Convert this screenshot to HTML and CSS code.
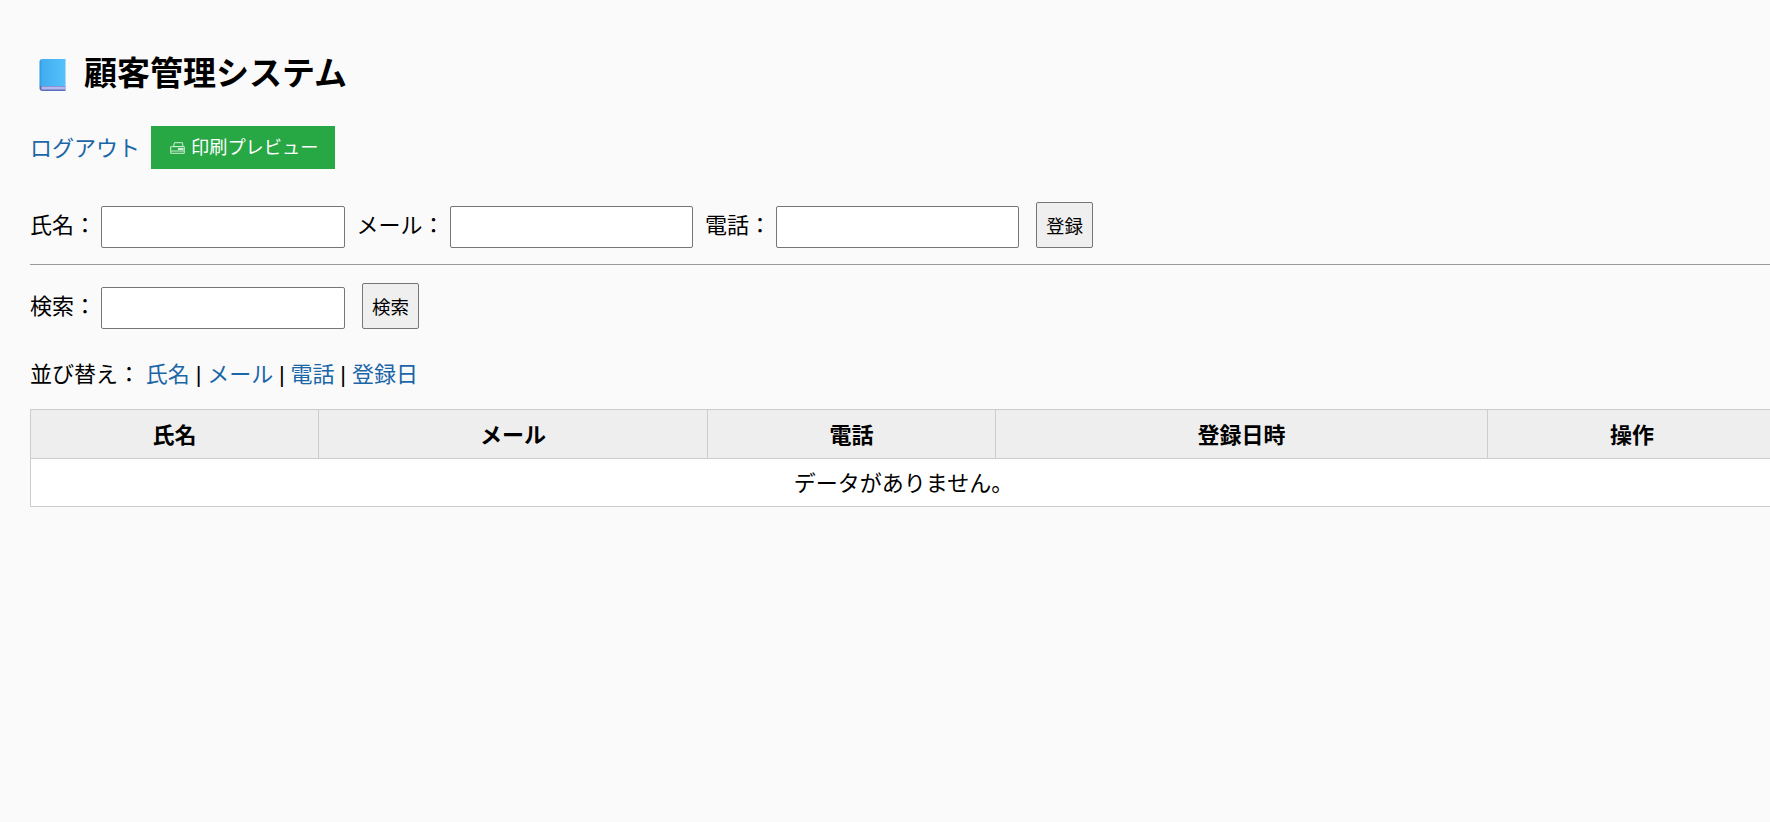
FILE: index.html
```html
<!DOCTYPE html>
<html lang="ja">
<head>
<meta charset="utf-8">
<title>顧客管理システム</title>
<link rel="stylesheet" href="styles.css">
</head>
<body>
<h1 class="title">
<svg class="book" viewBox="0 0 26 32" aria-hidden="true">
<defs><linearGradient id="bk" x1="0" y1="0" x2="1" y2="0"><stop offset="0" stop-color="#2f96dc"/><stop offset="0.1" stop-color="#42aef0"/><stop offset="1" stop-color="#55c0fa"/></linearGradient></defs>
<path d="M3 0H26V27H0V3Q0 0 3 0Z" fill="url(#bk)"/>
<path d="M0 27H26V32H3Q0 32 0 29Z" fill="#5a6fb8"/>
<rect x="2" y="27.5" width="24" height="3" fill="#b5b8ee"/>
</svg>
<span>顧客管理システム</span>
</h1>
<nav class="actions">
<a class="link logout" href="#">ログアウト</a>
<a class="print" href="#">
<svg class="printer" viewBox="0 0 15 12" aria-hidden="true">
<path d="M4.5 .7H12.5L13 4.5H3.5Z" fill="#28a745" stroke="#cfeed6"/>
<path d="M.7 4.7H14.3V11.3H.7Z" fill="none" stroke="#cfeed6"/>
<path d="M8 6H13.5V8H8ZM1 8.5H14V9.5H1Z" fill="#cfeed6"/>
</svg>
<span class="print-text">印刷プレビュー</span>
</a>
</nav>
<form class="row register">
<label class="lbl">氏名：</label><input class="field field-first" type="text">
<label class="lbl">メール：</label><input class="field" type="text">
<label class="lbl">電話：</label><input class="field" type="text">
<button class="btn" type="button">登録</button>
</form>
<hr class="rule">
<form class="row search">
<label class="lbl">検索：</label><input class="field field-first" type="text">
<button class="btn" type="button">検索</button>
</form>
<p class="sort">並び替え： <a class="link" href="#">氏名</a> | <a class="link" href="#">メール</a> | <a class="link" href="#">電話</a> | <a class="link" href="#">登録日</a></p>
<table class="data">
<colgroup><col class="c1"><col class="c2"><col class="c3"><col class="c4"><col class="c5"></colgroup>
<thead><tr><th>氏名</th><th>メール</th><th>電話</th><th>登録日時</th><th>操作</th></tr></thead>
<tbody><tr><td colspan="5">データがありません。</td></tr></tbody>
</table>
</body>
</html>
```
FILE: styles.css
```css
html, body { margin: 0; }
body {
  width: 100%;
  padding: 30px;
  background: #fafafa;
  color: #000;
  font-family: "Liberation Sans", "Noto Sans CJK JP", sans-serif;
  font-size: 22px;
  line-height: 1.2;
}
.title {
  display: flex;
  align-items: center;
  gap: 18px;
  height: 44px;
  margin: 22px 0 0 9px;
  font-size: 33px;
  font-weight: 700;
  line-height: 44px;
}
.book { width: 27px; height: 32px; flex: none; margin-top: 1px; }
.actions {
  display: flex;
  align-items: center;
  gap: 11px;
  margin-top: 30px;
}
.link { color: #1a66a8; text-decoration: none; }
.logout { padding-top: 4px; }
.print {
  display: flex;
  align-items: center;
  gap: 6px;
  height: 43px;
  padding: 0 17px 0 19px;
  background: #28a745;
  color: #fff;
  font-size: 18.2px;
  text-decoration: none;
}
.print-text { padding-top: 3px; }
.printer { width: 15px; height: 12px; flex: none; }
.row { display: flex; align-items: flex-end; }
.register { margin-top: 33px; }
.search { margin-top: 18px; }
.lbl { height: 42px; line-height: 40px; margin-right: 5px; }
.field {
  box-sizing: border-box;
  width: 243px;
  height: 42px;
  margin: 0 12.5px 0 0;
  padding: 1px 2px;
  background: #fff;
  border: 1px solid #767676;
  border-radius: 2px;
}
.field-first { width: 244px; margin-right: 11.5px; }
.btn {
  box-sizing: border-box;
  width: 57px;
  height: 46px;
  margin-left: 4.5px;
  padding: 0;
  background: #efefef;
  color: #000;
  border: 1px solid #767676;
  border-radius: 2px;
  font-family: inherit;
  font-size: 18.5px;
}
.search .btn { margin-left: 5.5px; }
.rule {
  margin: 16px 0 0;
  height: 0;
  border: 0;
  border-top: 1px solid #999;
}
.sort { margin: 28px 0 0; line-height: 36px; word-spacing: -0.3px; }
.data {
  width: 1746px;
  margin-top: 16px;
  border-collapse: collapse;
  table-layout: fixed;
  background: #fff;
}
.c1 { width: 288px; }
.c2 { width: 389px; }
.c3 { width: 288px; }
.c4 { width: 492px; }
.c5 { width: 289px; }
.data th, .data td {
  border: 1px solid #ccc;
  text-align: center;
  padding: 0;
  font-size: 22px;
}
.data th { height: 44px; padding-top: 4px; background: #eee; font-weight: 700; }
.data td { height: 43px; padding-top: 4px; }
```
